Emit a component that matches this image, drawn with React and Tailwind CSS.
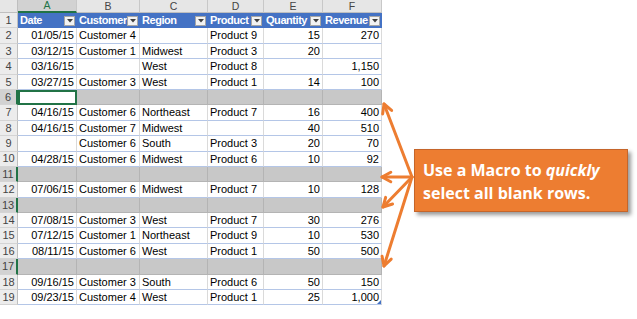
import React from "react";

const cols = [
  { key: "A", w: "w-[59px]", title: "Date", align: "text-right" },
  { key: "B", w: "w-[63px]", title: "Customer", align: "text-left" },
  { key: "C", w: "w-[68px]", title: "Region", align: "text-left" },
  { key: "D", w: "w-[56px]", title: "Product", align: "text-left" },
  { key: "E", w: "w-[59px]", title: "Quantity", align: "text-right" },
  { key: "F", w: "w-[59px]", title: "Revenue", align: "text-right" },
];

const rows = [
  ["01/05/15", "Customer 4", "", "Product 9", "15", "270"],
  ["03/12/15", "Customer 1", "Midwest", "Product 3", "20", ""],
  ["03/16/15", "", "West", "Product 8", "", "1,150"],
  ["03/27/15", "Customer 3", "West", "Product 1", "14", "100"],
  null,
  ["04/16/15", "Customer 6", "Northeast", "Product 7", "16", "400"],
  ["04/16/15", "Customer 7", "Midwest", "", "40", "510"],
  ["", "Customer 6", "South", "Product 3", "20", "70"],
  ["04/28/15", "Customer 6", "Midwest", "Product 6", "10", "92"],
  null,
  ["07/06/15", "Customer 6", "Midwest", "Product 7", "10", "128"],
  null,
  ["07/08/15", "Customer 3", "West", "Product 7", "30", "276"],
  ["07/12/15", "Customer 1", "Northeast", "Product 9", "10", "530"],
  ["08/11/15", "Customer 6", "West", "Product 1", "50", "500"],
  null,
  ["09/16/15", "Customer 3", "South", "Product 6", "50", "150"],
  ["09/23/15", "Customer 4", "West", "Product 1", "25", "1,000"],
];

const FilterButton = () => (
  <span className="ml-auto flex h-[10px] w-[11px] shrink-0 items-center justify-center border border-[#a6a6a6] bg-[#f3f3f3]">
    <svg width="6" height="4" viewBox="0 0 6 4">
      <path d="M0 0h6L3 3.5z" fill="#404040" />
    </svg>
  </span>
);

const RowHeader = ({ n, selected }) => (
  <div
    className={`flex w-[18px] shrink-0 items-center justify-center border-b border-[#d4d4d4] text-[11px] text-[#444] ${
      selected ? "border-r-2 border-r-[#217346] bg-[#d2d2d2]" : "border-r border-r-[#bfbfbf] bg-[#ececec]"
    }`}
  >
    {n}
  </div>
);

const Sheet = () => (
  <div className="flex w-[383px] shrink-0 flex-col font-['Liberation_Sans',sans-serif]">
    <div className="flex h-[13px]">
      <div className="w-[18px] shrink-0 border-r border-b border-[#bfbfbf] bg-[#e6e6e6]" />
      {cols.map((c) => (
        <div
          key={c.key}
          className={`${c.w} flex shrink-0 items-center justify-center border-r border-[#c8c8c8] text-[10.5px] leading-none ${
            c.key === "A" ? "border-b-2 border-b-[#217346] bg-[#d2d2d2] text-[#217346]" : "border-b border-b-[#bfbfbf] bg-[#e6e6e6] text-[#444]"
          }`}
        >
          {c.key}
        </div>
      ))}
    </div>

    <div className="flex h-[15.4px]">
      <RowHeader n={1} />
      {cols.map((c) => (
        <div
          key={c.key}
          className={`${c.w} flex shrink-0 items-center border-r border-[#4472c4] bg-[#4472c4] pl-[2px] pr-[1px] text-[11px] font-bold tracking-[-0.45px] text-white`}
        >
          <span className="whitespace-nowrap">{c.title}</span>
          <FilterButton />
        </div>
      ))}
    </div>

    {rows.map((r, i) => {
      const n = i + 2;
      if (!r) {
        return (
          <div key={n} className="flex h-[15.4px]">
            <RowHeader n={n} selected />
            {cols.map((c) =>
              n === 6 && c.key === "A" ? (
                <div key={c.key} className={`${c.w} shrink-0 border-2 border-[#217346] bg-white`} />
              ) : (
                <div key={c.key} className={`${c.w} shrink-0 border-r border-b border-[#b4b4b4] bg-[#c8c8c8]`} />
              )
            )}
          </div>
        );
      }
      return (
        <div key={n} className="flex h-[15.4px]">
          <RowHeader n={n} />
          {cols.map((c, j) => (
            <div
              key={c.key}
              className={`${c.w} ${c.align} relative shrink-0 overflow-visible whitespace-nowrap border-r border-b border-r-[#dadada] border-b-[#b4c6e7] px-[2px] text-[11px] leading-[14.4px] text-black ${
                c.key === "F" ? "border-r-[#8ea9db]" : ""
              }`}
            >
              {r[j]}
              {n === 19 && c.key === "F" && (
                <span className="absolute right-0 bottom-0 h-0 w-0 border-b-[4px] border-l-[4px] border-b-[#4472c4] border-l-transparent" />
              )}
            </div>
          ))}
        </div>
      );
    })}
  </div>
);

const arrows = [
  [384, 104],
  [382, 177],
  [383, 207],
  [384, 266],
];

const Arrows = () => (
  <svg className="pointer-events-none absolute top-0 left-0" width="637" height="319" viewBox="0 0 637 319">
    {arrows.map(([x, y], i) => {
      const sx = 412;
      const sy = 177;
      const ang = Math.atan2(sy - y, sx - x);
      const len = 10;
      const spread = 0.5;
      const ax = x + len * Math.cos(ang + spread);
      const ay = y + len * Math.sin(ang + spread);
      const bx = x + len * Math.cos(ang - spread);
      const by = y + len * Math.sin(ang - spread);
      return (
        <g key={i} stroke="#ed7d31" strokeWidth="3" fill="none" strokeLinecap="round" strokeLinejoin="round">
          <line x1={sx} y1={sy} x2={x} y2={y} />
          <polyline points={`${ax},${ay} ${x},${y} ${bx},${by}`} />
        </g>
      );
    })}
  </svg>
);

export default function App() {
  return (
    <div className="relative flex h-[319px] w-[637px] overflow-hidden bg-white">
      <Sheet />
      <div className="flex-1 pt-[149px] pl-[31px]">
        <div className="h-[63px] w-[214px] border border-[#c5652a] bg-[#ed7d31] px-[8px] pt-[9px] font-['Open_Sans',sans-serif] text-[16px] leading-[23px] font-bold text-white shadow-[3px_3px_4px_rgba(0,0,0,0.4)]">
          Use a Macro to <i>quickly</i>
          <br />
          select all blank rows.
        </div>
      </div>
      <Arrows />
    </div>
  );
}
